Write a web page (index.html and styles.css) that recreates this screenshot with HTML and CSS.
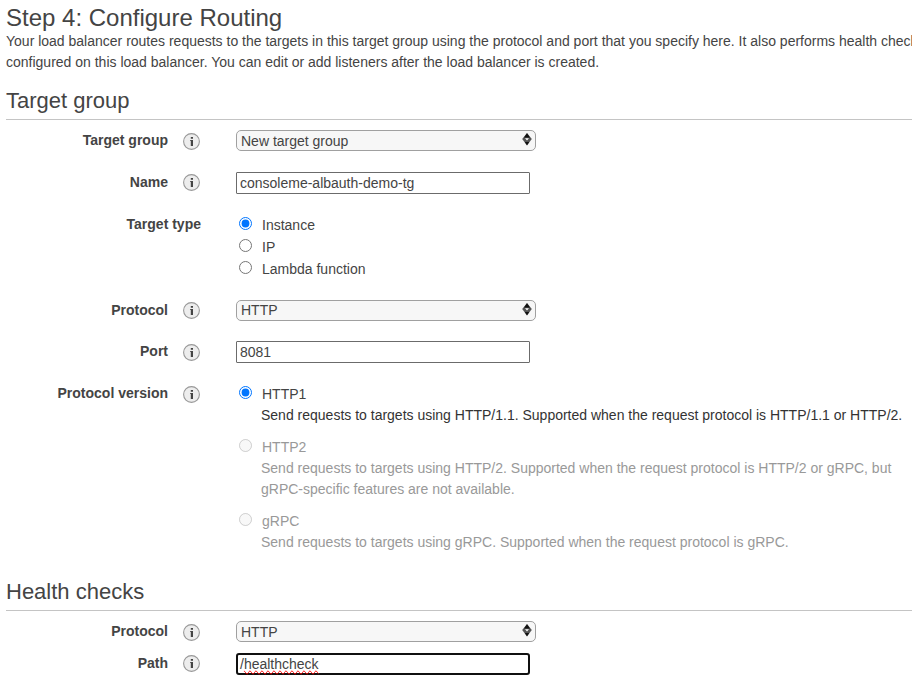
FILE: index.html
```html
<!DOCTYPE html>
<html lang="en">
<head>
<meta charset="utf-8">
<title>Step 4: Configure Routing</title>
<link rel="stylesheet" href="styles.css">
</head>
<body>
<svg class="defs" width="0" height="0">
  <symbol id="info" viewBox="0 0 17 17">
    <circle cx="8.5" cy="8.5" r="7.9" fill="#ededed" stroke="#999" stroke-width="1.1"/>
    <path d="M7.8 4h2.2v1.8H7.8zM7.2 6.9H10v6.2H7.8V7.9h-.6z" fill="#444"/>
  </symbol>
  <symbol id="arrows" viewBox="0 0 10 13">
    <path d="M5 0L9.8 6 5 12.6 .2 6z" fill="#555"/>
    <path d="M5 .3L8 4.6H2zM5 12.3L2.8 9h4.4z" fill="#111"/>
    <path d="M3 5.3h4L5 7.5z" fill="#fff"/>
  </symbol>
</svg>
<main class="page">
  <h1>Step 4: Configure Routing</h1>
  <p class="intro">Your load balancer routes requests to the targets in this target group using the protocol and port that you specify here. It also performs health checks<br>configured on this load balancer. You can edit or add listeners after the load balancer is created.</p>

  <h2>Target group</h2>
  <section class="form">
    <div class="row">
      <span class="label">Target group</span><svg class="info"><use href="#info"/></svg>
      <div class="select">New target group<svg class="arrows"><use href="#arrows"/></svg></div>
    </div>
    <div class="row name">
      <span class="label">Name</span><svg class="info high"><use href="#info"/></svg>
      <input class="text" type="text" value="consoleme-albauth-demo-tg">
    </div>
    <div class="row type">
      <span class="label wide">Target type</span>
      <div class="options">
        <label class="option"><input type="radio" name="type" checked>Instance</label>
        <label class="option"><input type="radio" name="type">IP</label>
        <label class="option"><input type="radio" name="type">Lambda function</label>
      </div>
    </div>
    <div class="row protocol">
      <span class="label">Protocol</span><svg class="info high"><use href="#info"/></svg>
      <div class="select">HTTP<svg class="arrows"><use href="#arrows"/></svg></div>
    </div>
    <div class="row port">
      <span class="label">Port</span><svg class="info"><use href="#info"/></svg>
      <input class="text" type="text" value="8081">
    </div>
    <div class="row version">
      <span class="label">Protocol version</span><svg class="info"><use href="#info"/></svg>
      <div class="options">
        <label class="option"><input type="radio" name="version" checked>HTTP1</label>
        <p class="hint">Send requests to targets using HTTP/1.1. Supported when the request protocol is HTTP/1.1 or HTTP/2.</p>
        <label class="option off"><input type="radio" name="version" disabled>HTTP2</label>
        <p class="hint off">Send requests to targets using HTTP/2. Supported when the request protocol is HTTP/2 or gRPC, but gRPC-specific features are not available.</p>
        <label class="option off"><input type="radio" name="version" disabled>gRPC</label>
        <p class="hint off">Send requests to targets using gRPC. Supported when the request protocol is gRPC.</p>
      </div>
    </div>
  </section>

  <h2>Health checks</h2>
  <section class="form">
    <div class="row health">
      <span class="label">Protocol</span><svg class="info"><use href="#info"/></svg>
      <div class="select">HTTP<svg class="arrows"><use href="#arrows"/></svg></div>
    </div>
    <div class="row">
      <span class="label">Path</span><svg class="info high"><use href="#info"/></svg>
      <div class="text focused">/<span class="misspelt">healthcheck</span></div>
    </div>
  </section>
</main>
</body>
</html>
```
FILE: styles.css
```css
* { box-sizing: border-box; }
body {
  margin: 0;
  background: #fff;
  color: #444;
  font: 14px/21px "Liberation Sans", Arial, sans-serif;
  overflow: hidden;
}
.defs { display: block; }
.page { padding: 5px 0 0 6px; }
h1, h2, p { margin: 0; font-weight: normal; }
h1 { font-size: 24px; line-height: 26px; }
.intro { white-space: nowrap; margin-bottom: 14px; }
h2 {
  font-size: 22px;
  line-height: 28px;
  height: 33px;
  border-bottom: 1px solid #c4c4c4;
  margin-bottom: 10px;
}
.row {
  display: grid;
  grid-template-columns: 162px 15px 17px 36px 1fr;
  align-items: start;
}
.row > :last-child { grid-column: 5; }
.row.name, .row.port { height: 42px; }
.form > .row:first-child { height: 42px; }
.row.type { height: 86px; }
.row.protocol { height: 41px; }
.row.version { height: 195px; }
.form > .row.health { height: 32px; }
.label { grid-column: 1; font-weight: bold; text-align: right; }
.label.wide { grid-column: 1 / 4; margin-right: -1px; }
.info { grid-column: 3; width: 17px; height: 17px; margin-top: 3px; }
.info.high { margin-top: 2px; }
.select {
  display: flex;
  justify-content: space-between;
  width: 300px;
  height: 21px;
  padding: 0 3px 0 4px;
  border: 1px solid #a0a0a0;
  border-radius: 5px;
  background: #f7f7f7;
  line-height: 20px;
}
.protocol .select { line-height: 19px; }
.arrows { width: 10px; height: 13px; margin-top: 2px; }
.text {
  width: 294px;
  height: 22px;
  margin: 0;
  padding: 0 3px;
  border: 1px solid #6b6b6b;
  border-radius: 1px;
  background: #fff;
  color: #444;
  font: inherit;
  line-height: 20px;
}
.text.focused {
  border: 2px solid #101010;
  border-radius: 3px;
  padding: 0 2px;
  line-height: 18px;
}
.misspelt { text-decoration-line: spelling-error; }
.option {
  display: flex;
  align-items: flex-start;
  height: 22px;
  line-height: 22px;
}
.option input { margin: 3px 10px 0 3px; width: 13px; height: 13px; }
.hint { width: 675px; padding-left: 25px; margin-bottom: 10px; color: #333; }
.option.off, .hint.off { color: #999; }
```
